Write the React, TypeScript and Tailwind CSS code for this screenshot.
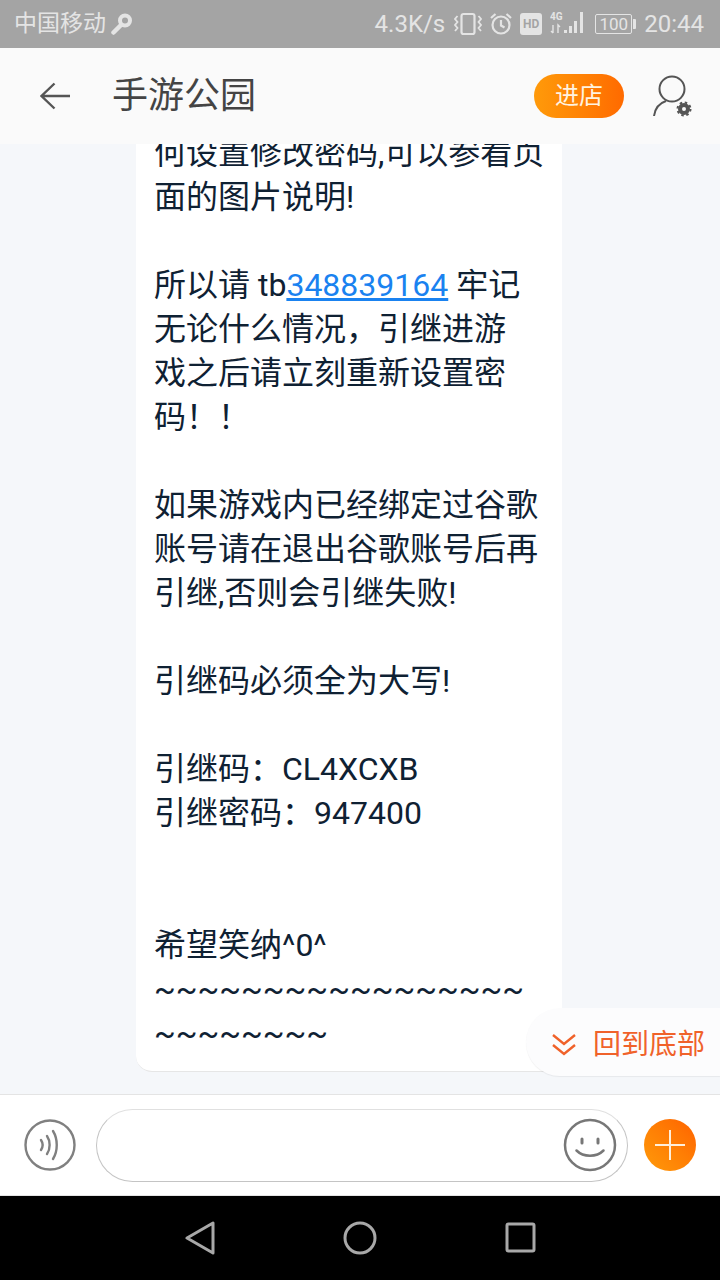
const FONT = "font-['Roboto','Noto_Sans_CJK_SC',sans-serif]";

function StatusBar() {
  return (
    <div className="flex h-12 items-center justify-between bg-[#a4a4a4] pl-[14px] pr-4 text-[24px] text-[#e4e4e4]">
      <div className="flex items-center gap-[5px]">
        <span className="text-[23px]">中国移动</span>
        <svg width="22" height="24" viewBox="0 0 22 24" fill="none">
          <circle cx="14" cy="8.500" r="5" stroke="#e4e4e4" strokeWidth="4" />
          <path d="M10 13 2.500 20.500" stroke="#e4e4e4" strokeWidth="4.500" strokeLinecap="round" />
        </svg>
      </div>
      <div className="flex items-center">
        <span className="mr-[9px]">4.3K/s</span>
        <svg width="28" height="24" viewBox="0 0 28 24" fill="none" stroke="#e4e4e4" strokeWidth="2.200">
          <rect x="7.500" y="2" width="13" height="20" rx="2" />
          <path d="M3.500 4 1 7l2.500 3L1 13l2.500 3L1 19M24.500 4 27 7l-2.500 3 2.500 3-2.500 3 2.500 3" strokeWidth="1.800" />
        </svg>
        <svg className="ml-[7px]" width="24" height="24" viewBox="0 0 24 24" fill="none" stroke="#e4e4e4" strokeWidth="2.200">
          <circle cx="12" cy="13" r="8.500" />
          <path d="M12 8v5.500l3.500 2M2 6l4.500-4M22 6l-4.500-4" />
        </svg>
        <span className="ml-[7px] flex h-[22px] w-[22px] items-center justify-center rounded-[3px] bg-[#e4e4e4] text-[12px] font-bold leading-none text-[#a4a4a4]">
          HD
        </span>
        <svg className="ml-2" width="36" height="26" viewBox="0 0 36 26" fill="#e4e4e4">
          <text x="0" y="9" fontSize="10" fontWeight="700" fontFamily="Roboto">4G</text>
          <path d="M3 14v8M1 20l2 2M8 22v-8l2 2" stroke="#e4e4e4" strokeWidth="1.400" fill="none" />
          <rect x="14" y="19" width="3" height="3" />
          <rect x="19" y="15" width="3" height="7" />
          <rect x="24" y="10" width="3" height="12" />
          <rect x="30" y="1" width="3" height="21" />
        </svg>
        <span className="ml-[9px] flex h-[20px] w-[37px] items-center justify-center rounded-[2px] border border-[#e4e4e4] text-[17px] leading-none">
          100
        </span>
        <span className="ml-[1px] h-[10px] w-[3px] rounded-r-[1px] bg-[#e4e4e4]" />
        <span className="ml-2">20:44</span>
      </div>
    </div>
  );
}

function Header() {
  return (
    <div className="flex h-24 items-center bg-[#fafafa] pl-10 pr-6">
      <svg width="30" height="28" viewBox="0 0 30 28" fill="none" stroke="#555" strokeWidth="2.400">
        <path d="M14.500 1.500 1.500 14l13 12.500M1.500 14H30" />
      </svg>
      <div className="ml-[42px] whitespace-nowrap text-[36px] text-[#444]">手游公园</div>
      <div className="ml-auto flex h-11 w-[90px] items-center justify-center rounded-full bg-gradient-to-r from-[#ff9a0a] to-[#ff6a00] text-[24px] text-[#fff3e0]">
        进店
      </div>
      <svg className="ml-[29px]" width="43" height="44" viewBox="0 0 43 44" fill="none">
        <circle cx="19" cy="15" r="12.500" stroke="#555" strokeWidth="2" />
        <path d="M1 42c1-8 6-13 12-15" stroke="#555" strokeWidth="2" />
        <circle cx="31" cy="35" r="4" stroke="#555" strokeWidth="4" />
        <circle cx="31" cy="35" r="6.500" stroke="#555" strokeWidth="2" strokeDasharray="2.500 2.600" />
      </svg>
    </div>
  );
}

function Message() {
  return (
    <div className="ml-[136px] w-[426px] whitespace-nowrap rounded-b-[16px] border-b border-[#e6e6e6] bg-white px-[18px] pb-[16px] text-[32px] leading-[44px] text-[#0f2133]">
      <p>何设置修改密码,可以参看页</p>
      <p>面的图片说明!</p>
      <p>&nbsp;</p>
      <p>
        所以请 tb<span className="text-[#1a82f0] underline">348839164</span> 牢记
      </p>
      <p>无论什么情况，引继进游</p>
      <p>戏之后请立刻重新设置密</p>
      <p>码！！</p>
      <p>&nbsp;</p>
      <p>如果游戏内已经绑定过谷歌</p>
      <p>账号请在退出谷歌账号后再</p>
      <p>引继,否则会引继失败!</p>
      <p>&nbsp;</p>
      <p>引继码必须全为大写!</p>
      <p>&nbsp;</p>
      <p>引继码：CL4XCXB</p>
      <p>引继密码：947400</p>
      <p>&nbsp;</p>
      <p>&nbsp;</p>
      <p>希望笑纳^0^</p>
      <p>~~~~~~~~~~~~~~~~~</p>
      <p>~~~~~~~~</p>
    </div>
  );
}

function InputBar() {
  return (
    <div className="flex h-[102px] items-center border-y border-[#e4e4e4] bg-white pl-6 pr-6">
      <svg width="52" height="52" viewBox="0 0 52 52" fill="none" stroke="#808080" strokeLinecap="round">
        <circle cx="26" cy="26" r="24.500" strokeWidth="2.400" />
        <path d="M17 21c2 3 2 7 0 10M23 17c3.500 5 3.500 13 0 18M29 12c5 8 5 20 0 28" strokeWidth="2.400" />
      </svg>
      <div className="ml-5 flex h-[73px] w-[532px] items-center justify-end rounded-full border border-[#c4c4c4] border-t-[#e0e0e0] pr-[10px]">
        <svg width="54" height="54" viewBox="0 0 54 54" fill="none" stroke="#777" strokeLinecap="round">
          <circle cx="27" cy="27" r="25" strokeWidth="2.500" />
          <path d="M13.500 32.500c7 7 20 7 27 0" strokeWidth="2.500" />
          <path d="M19 21v4M35 21v4" strokeWidth="3" />
        </svg>
      </div>
      <div className="ml-4 flex h-[52px] w-[52px] items-center justify-center rounded-full bg-gradient-to-tr from-[#ff9a0a] to-[#ff6200]">
        <svg width="32" height="32" viewBox="0 0 32 32" stroke="#ffeeda" strokeWidth="2">
          <path d="M1 16h30M16 1v30" />
        </svg>
      </div>
    </div>
  );
}

function NavBar() {
  return (
    <div className="flex h-[84px] items-center justify-center gap-[128px] bg-black">
      <svg width="32" height="34" viewBox="0 0 32 34" fill="none" stroke="#a8a8a8" strokeWidth="3" strokeLinejoin="round">
        <path d="M30 2v30L4 17Z" />
      </svg>
      <svg width="34" height="34" viewBox="0 0 34 34" fill="none" stroke="#a8a8a8" strokeWidth="3">
        <circle cx="17" cy="17" r="15" />
      </svg>
      <svg width="32" height="32" viewBox="0 0 32 32" fill="none" stroke="#a8a8a8" strokeWidth="3" strokeLinejoin="round">
        <rect x="2" y="2" width="27" height="27" rx="1.500" />
      </svg>
    </div>
  );
}

export default function App() {
  return (
    <div className={`flex h-[1280px] w-[720px] flex-col overflow-hidden ${FONT}`}>
      <StatusBar />
      <Header />
      <div className="relative flex min-h-0 flex-1 flex-col justify-end overflow-hidden bg-[#f5f7fa] pb-[22px]">
        <Message />
        {/* floating jump-to-bottom pill */}
        <div className="absolute bottom-[18px] right-0 flex h-[68px] w-[194px] items-center rounded-l-[34px] bg-[#fcfcfd] pl-[25px] pt-[5px] text-[28px] text-[#f0622a] shadow-[0_1px_1px_rgba(0,0,0,0.06)]">
          <svg width="26" height="24" viewBox="0 0 26 24" fill="none" stroke="#f0622a" strokeWidth="2.400">
            <path d="M2 2l11 9 11-9M2 12l11 9 11-9" />
          </svg>
          <span className="ml-[16px] whitespace-nowrap">回到底部</span>
        </div>
      </div>
      <InputBar />
      <NavBar />
    </div>
  );
}
